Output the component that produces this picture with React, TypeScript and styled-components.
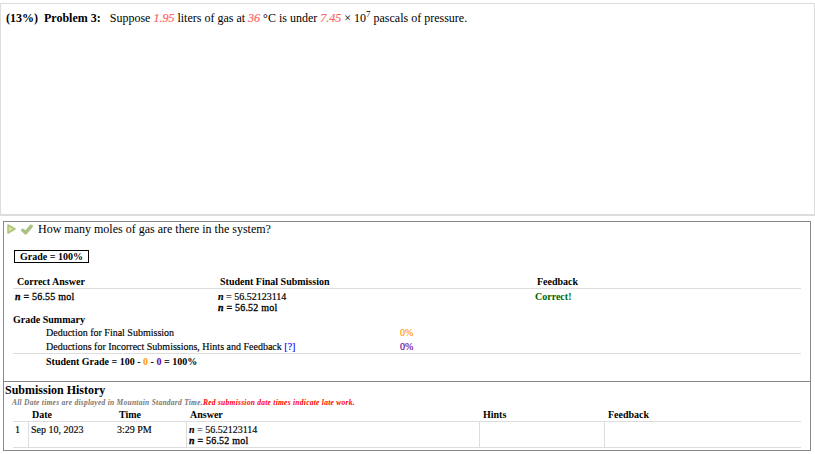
import React from 'react'
import styled, { createGlobalStyle } from 'styled-components'

const GlobalStyle = createGlobalStyle`
  html, body {
    margin: 0;
    padding: 0;
    background: #fff;
    font-family: "Liberation Serif", "Times New Roman", serif;
    color: #000;
  }
`

const Page = styled.div`
  width: 815px;
  height: 454px;
  padding-top: 3px;
  box-sizing: border-box;
  overflow: hidden;
`

const ProblemBox = styled.div`
  height: 213px;
  box-sizing: border-box;
  border: 1px solid #ddd;
  border-width: 1px 1px 2px 1px;
  padding: 6px 5px;
  font-size: 12px;
  line-height: 16px;
  white-space: pre;
`

const Given = styled.i`
  color: #f66;
  -webkit-text-stroke: 0.2px;
`

const Sup = styled.sup`
  font-size: 9px;
  line-height: 0;
`

const PartBox = styled.div`
  margin: 5px 0 0 3px;
  width: 808px;
  height: 230px;
  box-sizing: border-box;
  border: 1px solid #888;
  display: flex;
  flex-direction: column;
`

const PartBody = styled.div`
  height: 160px;
  box-sizing: border-box;
  border-bottom: 1px solid #888;
`

const Question = styled.div`
  display: flex;
  align-items: center;
  height: 14px;
  padding-left: 3px;
  font-size: 12px;
  gap: 5px;
`

const GradeBadge = styled.div`
  width: 73px;
  height: 11px;
  margin: 14px 0 0 10px;
  border: 1px solid #000;
  font-size: 10px;
  font-weight: bold;
  line-height: 11px;
  text-align: center;
`

const AnswerGrid = styled.div`
  display: grid;
  grid-template-columns: 203px 317px 1fr;
  margin: 13px 9px 0 9px;
  font-size: 10px;
  line-height: 11px;
`

const HeadCell = styled.div`
  font-weight: bold;
  padding-left: 4px;
  height: 12px;
  border-bottom: 1px solid #ddd;
`

const Cell = styled.div`
  padding: 2px 0 0 2px;
  -webkit-text-stroke: 0.2px;
`

const Correct = styled.span`
  color: #060;
  font-weight: bold;
  -webkit-text-stroke: 0;
`

const Var = styled.b`
  font-style: italic;
`

const FinalValue = styled.span`
  letter-spacing: 0.2px;
  -webkit-text-stroke: 0.3px;
`

const SummaryTitle = styled.div`
  margin-left: 9px;
  font-size: 10px;
  font-weight: bold;
  line-height: 13px;
`

const SummaryRow = styled.div<{ $line?: boolean }>`
  display: grid;
  grid-template-columns: 354px 1fr;
  margin: 0 9px;
  padding-left: 33px;
  height: ${p => (p.$line ? 13 : 14)}px;
  font-size: 10px;
  line-height: 13px;
  -webkit-text-stroke: 0.15px;
  ${p => p.$line && 'border-bottom: 1px solid #ddd;'}
`

const GradeLine = styled.div`
  margin: 1px 0 0 42px;
  font-size: 10px;
  font-weight: bold;
  line-height: 13px;
`

const Tone = styled.span<{ $color: string }>`
  color: ${p => p.$color};
`

const HelpLink = styled.a`
  color: #00f;
`

const History = styled.div`
  padding-left: 1px;
`

const HistoryTitle = styled.div`
  font-size: 12px;
  font-weight: bold;
  line-height: 15px;
  margin-top: 1px;
`

const Note = styled.div`
  margin: 1px 0 0 7px;
  font-size: 7.5px;
  letter-spacing: 0.26px;
  font-style: italic;
  font-weight: bold;
  line-height: 8px;
  color: #777;
  white-space: nowrap;
`

const LateNote = styled.span`
  color: #f00;
`

const HistoryGrid = styled.div`
  display: grid;
  grid-template-columns: 15px 87px 71px 293px 125px 1fr;
  margin: 2px 9px 0 8px;
  font-size: 10px;
  line-height: 11px;
`

const HistoryHead = styled.div<{ $indent: number }>`
  height: 12px;
  padding-left: ${p => p.$indent}px;
  font-weight: bold;
  border-bottom: 1px solid #ddd;
`

const HistoryCell = styled.div<{ $rule?: boolean }>`
  height: 23px;
  padding: 2px 0 0 2px;
  border-bottom: 1px solid #ddd;
  -webkit-text-stroke: 0.15px;
  ${p => p.$rule && 'border-left: 1px solid #ddd;'}
`

const PlayIcon = () => (
  <svg width="9" height="10" viewBox="0 0 9 10">
    <path d="M1 1 L8 5 L1 9 Z" fill="#d5e29a" stroke="#b0c478" strokeWidth="1.5" strokeLinejoin="round" />
  </svg>
)

const CheckIcon = () => (
  <svg width="12" height="11" viewBox="0 0 12 11">
    <path d="M1.8 6.2 L4.6 8.8 L10.2 2.2" fill="none" stroke="#a9bf84" strokeWidth="3.4" strokeLinecap="round" strokeLinejoin="round" />
  </svg>
)

const App: React.FC = () => {
  return (
    <Page>
      <GlobalStyle />
      <ProblemBox>
        <b>(13%)  Problem 3:</b>{'   '}Suppose <Given>1.95</Given> liters of gas at <Given>36</Given> °C is under <Given>7.45</Given> × 10<Sup>7</Sup> pascals of pressure.
      </ProblemBox>
      <PartBox>
        <PartBody>
          <Question>
            <PlayIcon />
            <CheckIcon />
            <span>How many moles of gas are there in the system?</span>
          </Question>
          <GradeBadge>Grade = 100%</GradeBadge>
          <AnswerGrid>
            <HeadCell>Correct Answer</HeadCell>
            <HeadCell>Student Final Submission</HeadCell>
            <HeadCell>Feedback</HeadCell>
            <Cell><FinalValue><Var>n</Var> = 56.55 mol</FinalValue></Cell>
            <Cell>
              <Var>n</Var> = 56.52123114
              <br />
              <FinalValue><Var>n</Var> = 56.52 mol</FinalValue>
            </Cell>
            <Cell><Correct>Correct!</Correct></Cell>
          </AnswerGrid>
          <SummaryTitle>Grade Summary</SummaryTitle>
          <SummaryRow>
            <span>Deduction for Final Submission</span>
            <Tone $color="#f90">0%</Tone>
          </SummaryRow>
          <SummaryRow $line>
            <span>Deductions for Incorrect Submissions, Hints and Feedback <HelpLink>[?]</HelpLink></span>
            <Tone $color="#609">0%</Tone>
          </SummaryRow>
          <GradeLine>
            Student Grade = 100 - <Tone $color="#f90">0</Tone> - <Tone $color="#609">0</Tone> = 100%
          </GradeLine>
        </PartBody>
        <History>
          <HistoryTitle>Submission History</HistoryTitle>
          <Note>
            All Date times are displayed in Mountain Standard Time.<LateNote>Red submission date times indicate late work.</LateNote>
          </Note>
          <HistoryGrid>
            <HistoryHead $indent={0} />
            <HistoryHead $indent={4}>Date</HistoryHead>
            <HistoryHead $indent={4}>Time</HistoryHead>
            <HistoryHead $indent={4}>Answer</HistoryHead>
            <HistoryHead $indent={4}>Hints</HistoryHead>
            <HistoryHead $indent={4}>Feedback</HistoryHead>
            <HistoryCell>1</HistoryCell>
            <HistoryCell $rule>Sep 10, 2023</HistoryCell>
            <HistoryCell>3:29 PM</HistoryCell>
            <HistoryCell $rule>
              <Var>n</Var> = 56.52123114
              <br />
              <FinalValue><Var>n</Var> = 56.52 mol</FinalValue>
            </HistoryCell>
            <HistoryCell $rule />
            <HistoryCell $rule />
          </HistoryGrid>
        </History>
      </PartBox>
    </Page>
  )
}

export default App
